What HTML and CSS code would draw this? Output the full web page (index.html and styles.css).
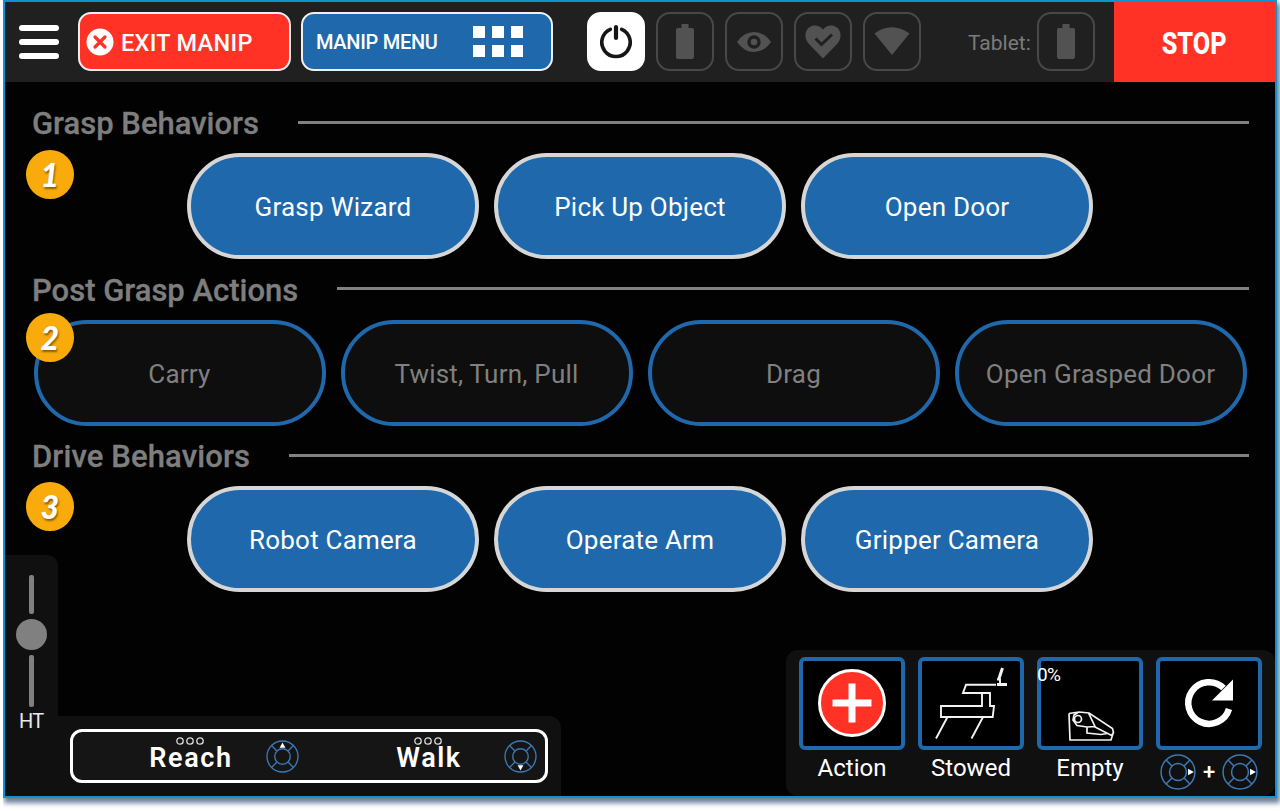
FILE: index.html
```html
<!DOCTYPE html>
<html lang="en">
<head>
<meta charset="utf-8">
<title>Manipulation Menu</title>
<link rel="stylesheet" href="styles.css">
</head>
<body>
<svg class="defs" width="0" height="0">
  <defs>
    <symbol id="pad" viewBox="0 0 34 34">
      <g fill="none" stroke="#3d78b4" stroke-width="1.4">
        <circle cx="17" cy="17" r="16"/><circle cx="17" cy="17" r="8"/>
        <path d="M5.7 5.7 11.3 11.3M28.3 5.7 22.7 11.3M5.7 28.3 11.3 22.7M28.3 28.3 22.7 22.7"/>
      </g>
    </symbol>
    <symbol id="battery" viewBox="0 0 18 35">
      <path fill="#525252" d="M5.5 0h7v4h3.500a2 2 0 0 1 2 2v27a2 2 0 0 1-2 2H2a2 2 0 0 1-2-2V6a2 2 0 0 1 2-2h3.500z"/>
    </symbol>
  </defs>
</svg>
<div class="screen">
  <header class="topbar">
    <div class="burger"><i></i><i></i><i></i></div>
    <button class="btn exit">
      <svg width="28" height="28" viewBox="0 0 28 28"><circle cx="14" cy="14" r="13.500" fill="#fff"/><path d="M9 9l10 10M19 9L9 19" stroke="#ff3225" stroke-width="3.200" stroke-linecap="round"/></svg>
      <span class="exit-text">EXIT MANIP</span>
    </button>
    <button class="btn menu">
      <span class="menu-text">MANIP MENU</span>
      <span class="dots"><i></i><i></i><i></i><i></i><i></i><i></i></span>
    </button>
    <div class="statuses">
      <div class="status power"><svg width="34" height="36" viewBox="0 0 34 36" fill="none" stroke="#161616" stroke-linecap="round"><path stroke-width="3.600" d="M11.300 6.300A14.200 14.200 0 1 0 22.700 6.300"/><path stroke-width="4.200" d="M17 4v11"/></svg></div>
      <div class="status"><svg width="18" height="35"><use href="#battery"/></svg></div>
      <div class="status"><svg width="34" height="20" viewBox="0 0 34 20"><path fill="#525252" d="M0 10Q7 0 17 0T34 10Q27 20 17 20T0 10z"/><circle cx="17" cy="10" r="5" fill="none" stroke="#202020" stroke-width="3.400"/></svg></div>
      <div class="status"><svg width="36" height="34" viewBox="0 0 36 34"><path fill="#525252" d="M18 33.500L4 19C-1 13.500-.5 6 4 2.500 8.500-.8 14.500 0 18 4.500 21.500 0 27.500-.8 32 2.500 36.500 6 37 13.500 32 19z"/><path fill="none" stroke="#202020" stroke-width="3" d="M10.500 13.500l6 6 10.500-10"/></svg></div>
      <div class="status wifi"><svg width="36" height="28" viewBox="0 0 36 28"><path fill="#525252" d="M.5 6.500Q17.500-6 35.500 6.500L18 28z"/></svg></div>
    </div>
    <span class="tablet">Tablet:</span>
    <div class="status"><svg width="18" height="35"><use href="#battery"/></svg></div>
    <button class="stop"><span>STOP</span></button>
  </header>

  <main>
    <section>
      <div class="heading"><h2 class="h-grasp">Grasp Behaviors</h2><hr></div>
      <div class="pills"><button class="pill">Grasp Wizard</button><button class="pill">Pick Up Object</button><button class="pill">Open Door</button></div>
      <span class="badge">1</span>
    </section>
    <section>
      <div class="heading"><h2 class="h-post">Post Grasp Actions</h2><hr></div>
      <div class="pills"><button class="pill off">Carry</button><button class="pill off">Twist, Turn, Pull</button><button class="pill off">Drag</button><button class="pill off">Open Grasped Door</button></div>
      <span class="badge badge-over">2</span>
    </section>
    <section>
      <div class="heading"><h2 class="h-drive">Drive Behaviors</h2><hr></div>
      <div class="pills"><button class="pill">Robot Camera</button><button class="pill">Operate Arm</button><button class="pill">Gripper Camera</button></div>
      <span class="badge badge-last">3</span>
    </section>
  </main>

  <footer class="dock">
    <div class="height">
      <i class="track up"></i><i class="knob"></i><i class="track down"></i>
      <span>HT</span>
    </div>
    <div class="modes">
      <div class="modebox">
        <div class="mode reach"><svg class="rings" width="28" height="8" viewBox="0 0 28 8" fill="none" stroke="#ddd" stroke-width="1.300"><circle cx="4" cy="4" r="3.200"/><circle cx="14" cy="4" r="3.200"/><circle cx="24" cy="4" r="3.200"/></svg><b>Reach</b></div>
        <svg class="pad-reach" width="33" height="33" viewBox="0 0 34 34"><use href="#pad"/><path fill="#fff" d="M17 2.500l3 5.500h-6z"/></svg>
        <div class="mode walk"><svg class="rings" width="28" height="8" viewBox="0 0 28 8" fill="none" stroke="#ddd" stroke-width="1.300"><circle cx="4" cy="4" r="3.200"/><circle cx="14" cy="4" r="3.200"/><circle cx="24" cy="4" r="3.200"/></svg><b>Walk</b></div>
        <svg class="pad-walk" width="33" height="33" viewBox="0 0 34 34"><use href="#pad"/><path fill="#fff" d="M17 31.500l3-5.500h-6z"/></svg>
      </div>
    </div>
    <div class="tools">
      <div class="tool">
        <div class="tile"><svg width="98" height="85" viewBox="0 0 98 85"><circle cx="49" cy="42" r="32.500" fill="#ff3225" stroke="#fff" stroke-width="3"/><path stroke="#fff" stroke-width="7" d="M49 22.500v39M29.500 42h39"/></svg></div>
        <span>Action</span>
      </div>
      <div class="tool">
        <div class="tile"><svg width="98" height="85" viewBox="0 0 98 85" fill="none" stroke="#f2f2f2" stroke-width="1.900"><path d="M74 23.800H44l-3 8.200H68V45H72l-1.300 11H19V45H60V32M25.500 56L14 77.500M61 56L49.500 77.500"/><path stroke-width="3" d="M75 23.500h10M76.500 19L80.500 7"/><path d="M75 18.500h3v5"/></svg></div>
        <span>Stowed</span>
      </div>
      <div class="tool">
        <div class="tile"><em>0%</em><svg width="98" height="85" viewBox="0 0 98 85" fill="none" stroke="#f2f2f2" stroke-width="1.700"><path d="M28 52.500l1 26.500h41l2-6.500M28 52.500l10-1.500 10 1 23.500 15.500 1 4-2 3-17.500-9M46 66v6l14 1.500 6-1M47.500 52l6.500 13.500-8 .5-10-1.500-4-5.500 1-5 4-2.500"/><circle cx="37" cy="58" r="3.500"/></svg></div>
        <span>Empty</span>
      </div>
      <div class="tool">
        <div class="tile"><svg width="98" height="85" viewBox="0 0 98 85"><path fill="none" stroke="#fff" stroke-width="6.500" d="M69 48A20.800 20.800 0 1 1 63.500 27"/><path fill="#fff" d="M73 18.500v21H52z"/></svg></div>
        <div class="combo"><svg width="36" height="36" viewBox="0 0 34 34"><use href="#pad"/><path fill="#fff" d="M32 17l-5.500-3v6z"/></svg><b>+</b><svg width="36" height="36" viewBox="0 0 34 34"><use href="#pad"/><path fill="#fff" d="M32 17l-5.500-3v6z"/></svg></div>
      </div>
    </div>
  </footer>
</div>
</body>
</html>
```
FILE: styles.css
```css
* { box-sizing: border-box; }
html { height: 811px; background: #fff; }
body { height: 811px; margin: 0; font-family: Roboto, "Liberation Sans", sans-serif; }
.defs { display: block; }
button { font: inherit; margin: 0; padding: 0; }
svg { display: block; flex: none; }
i { display: block; }
.screen { position: relative; width: 1274px; height: 798px; margin-left: 3px; border: 2px solid #0d93cf; background: #020202; box-shadow: 2px 4px 5px 1px #6a7f99; clip-path: inset(0 -3px -13px 0); }

.topbar { display: flex; align-items: center; height: 79.500px; background: #202020; }
.burger { display: grid; gap: 8px; width: 40px; margin-left: 14px; }
.burger i { height: 6px; border-radius: 3px; background: #fff; }
.btn { display: flex; align-items: center; height: 59px; border: 2px solid #f0f0f0; border-radius: 13px; color: #fff; font-weight: 500; white-space: nowrap; }
.exit { width: 213px; margin-left: 19px; padding-left: 6px; gap: 7px; background: #ff3225; font-size: 23.500px; letter-spacing: .3px; }
.exit-text { padding-top: 2px; }
.menu { width: 252px; margin-left: 10px; padding-left: 13px; background: #1e68ab; font-size: 20px; }
.menu-text { width: 157px; text-align: left; letter-spacing: -.3px; padding-top: 1px; }
.dots { display: grid; grid-template-columns: repeat(3, 12px); gap: 7px; }
.dots i { height: 12px; background: #fff; }
.statuses { display: flex; gap: 11px; margin-left: 34px; }
.status { display: flex; align-items: center; justify-content: center; width: 58px; height: 59px; border: 2px solid #484848; border-radius: 14px; }
.power { border-color: #fff; background: #fff; }
.power svg { margin-bottom: 2px; }
.wifi svg { margin-bottom: 2px; }
.tablet { width: 69px; margin-left: 47px; padding-top: 2px; color: #7b7b7b; font-size: 21px; }
.stop { align-self: stretch; width: 161px; margin-left: auto; padding-top: 2px; border: 0; background: #ff3225; color: #fff; font-size: 32px; font-weight: 800; }
.stop span { display: inline-block; transform: scaleX(.79); }

main { padding-top: 11.500px; }
section { position: relative; height: 166.700px; }
.heading { display: flex; align-items: center; height: 60px; padding: 0 26px 0 27px; }
h2 { margin: 0; padding-top: 1px; color: #7e7e7e; font-size: 31px; font-weight: 500; white-space: nowrap; -webkit-text-stroke: .3px #7e7e7e; }
.h-grasp { width: 266px; }
.h-post { width: 305px; }
.h-drive { width: 257px; letter-spacing: .12px; }
hr { flex: 1; height: 3px; margin: 0 0 2px; border: 0; background: #808080; }
.pills { display: flex; justify-content: center; gap: 15px; }
.pill { width: 292px; height: 106px; padding-top: 2px; border: 4.500px solid #d6d6d6; border-radius: 53px; background: #1e68ab; color: #fff; font-size: 26px; letter-spacing: .22px; }
.off { border-color: #1e68ab; background: #0e0e0e; color: #808080; }
.badge { position: absolute; left: 20.500px; top: 57px; width: 48.500px; height: 49px; border-radius: 50%; background: #f8ab0b; color: #fff; font: italic 900 32px/49px Lato, sans-serif; text-align: center; text-shadow: 1px 2px 2px rgba(70,45,0,.6); }
.badge-over { top: 53.500px; }
.badge-last { top: 55.300px; }

.dock { position: absolute; left: 0; right: 0; bottom: 0; display: flex; align-items: flex-end; }
.height { display: flex; flex-direction: column; align-items: center; width: 52.500px; height: 241px; padding-top: 20px; border-radius: 0 11px 0 0; background: #101010; color: #e8e8e8; font-size: 20px; }
.track { width: 5px; border-radius: 2px; background: #808080; }
.up { height: 38.500px; }
.knob { width: 31px; height: 31px; margin: 5px 0; border-radius: 50%; background: #808080; }
.down { height: 52px; }
.height span { line-height: 24px; margin-top: 2px; letter-spacing: -.6px; }
.modes { width: 503px; height: 80px; padding: 13px 13px 13px 12.500px; border-radius: 0 12px 0 0; background: #101010; }
.modebox { display: flex; align-items: center; height: 54px; border: 3.500px solid #fff; border-radius: 12px; background: #151515; color: #fff; }
.mode { display: flex; flex-direction: column; align-items: center; font-size: 27px; line-height: 32px; padding-bottom: 2px; }
.mode b { font-weight: 600; letter-spacing: 1.600px; margin-top: -3px; margin-right: -2px; }
.reach { width: 82px; margin-left: 76px; }
.pad-reach { margin-left: 35px; }
.walk { width: 66px; margin-left: 96px; }
.pad-walk { margin-left: 43px; }
.tools { display: flex; gap: 13px; width: 489px; height: 146px; margin-left: auto; padding: 7px 13px 0; border-radius: 12px; background: #101010; }
.tool { width: 106px; color: #fff; font-size: 24px; text-align: center; }
.tile { position: relative; height: 93px; border: 4px solid #1e68ab; border-radius: 6px; background: #000; }
.tile em { position: absolute; left: -4px; top: 3px; font-size: 19px; font-style: normal; line-height: 22px; letter-spacing: -.7px; }
.tool > span { display: block; line-height: 28px; margin-top: 4px; }
.combo { display: flex; align-items: center; justify-content: center; gap: 7px; margin-top: 4px; }
.combo b { font-size: 22px; font-weight: 500; line-height: 22px; }
```
